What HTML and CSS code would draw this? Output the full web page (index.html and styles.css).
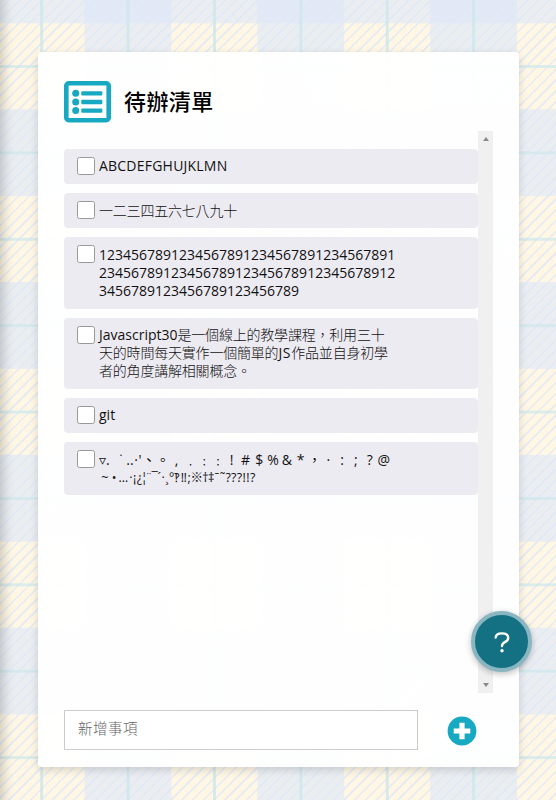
FILE: index.html
```html
<!DOCTYPE html>
<html lang="zh-Hant">
<head>
<meta charset="utf-8">
<title>待辦清單</title>
<link rel="stylesheet" href="styles.css">
</head>
<body>
<main class="card">
  <header class="head">
    <svg class="list-icon" viewBox="0 0 47 42">
      <rect x="2.3" y="2.3" width="42.4" height="36.9" rx="2.5" fill="none" stroke="#17a9c1" stroke-width="4.6"/>
      <g fill="#17a9c1"><circle cx="11.7" cy="12.3" r="3.5"/><circle cx="11.7" cy="20.9" r="3.5"/><circle cx="11.7" cy="29.6" r="3.5"/>
      <rect x="17.3" y="10.2" width="21" height="4.4" rx="1"/><rect x="17.3" y="18.8" width="21" height="4.4" rx="1"/><rect x="17.3" y="27.4" width="21" height="4.4" rx="1"/></g>
    </svg>
    <h1>待辦清單</h1>
  </header>
  <section class="scroll">
    <ul class="list">
      <li><i class="box"></i><p class="caps">ABCDEFGHUJKLMN</p></li>
      <li><i class="box"></i><p class="han">一二三四五六七八九十</p></li>
      <li><i class="box"></i><p>1234567891234567891234567891234567891<br>2345678912345678912345678912345678912<br>3456789123456789123456789</p></li>
      <li><i class="box"></i><p class="han"><span class="latin">Javascript30</span>是一個線上的教學課程，利用三十<br>天的時間每天實作一個簡單的<span class="latin js">JS</span>作品並自身初學<br>者的角度講解相關概念。</p></li>
      <li><i class="box"></i><p>git</p></li>
      <li><i class="box"></i><div class="marks">
        <div class="line"><b class="start">▿.</b><b class="end">˙</b><b class="gap">..</b><b class="dot">·</b><b class="dot">'</b><b>、</b><b>。</b><b>,</b><b>﹒</b><b>﹕</b><b>﹕</b><b>!</b><b>#</b><b>$</b><b>%</b><b>&amp;</b><b>*</b><b>，</b><b>·</b><b>:</b><b>;</b><b>?</b><b class="at">@</b></div>
        <div class="line dense"><b class="w3">~</b><b class="w2">•</b><b class="w3">…</b><b>·</b><b>¡</b><b class="w1">¿</b><b>¦</b><b class="w1">¨</b><b class="w1">¯</b><b>´</b><b>·</b><b>¸</b><b class="w1">º</b><b class="w1">‽</b><b class="w2">‼</b><b>;</b><b class="w3">※</b><b class="w1">†</b><b class="w1">‡</b><b class="w1">ˉ</b><b class="w1">˜</b><b class="w1">?</b><b class="w1">?</b><b class="w1">?</b><b>!</b><b>!</b><b class="w1">?</b></div>
      </div></li>
    </ul>
    <div class="bar"><i class="up"></i><i class="down"></i></div>
  </section>
  <footer class="foot">
    <input type="text" placeholder="新增事項">
    <svg class="add" viewBox="0 0 30 30"><circle cx="15" cy="15" r="14.4" fill="#17a9c1"/><path d="M15 6.7V23.3M6.7 15H23.3" stroke="#fff" stroke-width="5.2"/></svg>
  </footer>
</main>
<div class="help"><svg viewBox="0 0 20 24"><path d="M3.7 7.5C3.9 4.5 6.7 3.4 9.9 3.4c3.8 0 6.3 1.7 6.3 4.5 0 2.1-1.5 3.2-3.4 4.2-2 1.1-2.8 2-2.8 4" fill="none" stroke="#fff" stroke-width="2.4" stroke-linecap="round"/><circle cx="10" cy="20.7" r="1.7" fill="#fff"/></svg></div>
</body>
</html>
```
FILE: styles.css
```css
* { box-sizing: border-box; }
html, body { margin: 0; width: 556px; height: 800px; overflow: hidden; }
body {
  position: relative;
  padding: 52px 37px 33px 38px;
  font: 14px/18px "Open Sans", "Noto Sans CJK TC", sans-serif;
  color: #111;
  box-shadow: inset 15px 0 12px -12px rgba(0,0,0,.2);
  background:
    linear-gradient(90deg, rgba(205,231,236,.8) 3px, transparent 3px) 40.2px 0 / 86.4px 86.4px,
    linear-gradient(rgba(205,231,236,.7) 3px, transparent 3px) 0 65px / 86.4px 86.4px,
    repeating-linear-gradient(135deg, transparent 0 5.64px, rgba(222,232,247,.75) 5.9px 7.4px, transparent 7.64px),
    linear-gradient(90deg, transparent 50%, rgba(221,231,249,.6) 50%) -1.4px 0 / 172.8px 172.8px,
    linear-gradient(transparent 50%, rgba(221,231,249,.6) 50%) 0 23.3px / 172.8px 172.8px,
    #fff7e4;
}
.card {
  display: flex;
  flex-direction: column;
  height: 715px;
  padding: 29px 26px 17px;
  border-radius: 4px;
  background: rgba(255,255,255,.95);
  box-shadow: 0 3px 9px rgba(0,0,0,.15);
}
.head { display: flex; gap: 13px; height: 50px; }
.list-icon { width: 47px; height: 42px; }
h1 { margin: 4px 0 0; font: 500 22px/30px "Noto Sans CJK TC", sans-serif; letter-spacing: .4px; color: #000; }
.scroll { display: flex; height: 562px; }
.list { display: flex; flex-direction: column; gap: 8.8px; width: 414px; margin: 0; padding: 17.8px 0 0; list-style: none; }
.list li { display: flex; gap: 4px; padding: 8.7px 0 8.75px 13px; border-radius: 4px; background: #edebf2; }
.box { flex: none; width: 18px; height: 18px; margin-top: -.6px; border: 1px solid #999; border-radius: 2.5px; background: #fff; }
p { margin: 0; font-weight: 400; }
.han { font-family: "Open Sans", "Noto Sans CJK TC", sans-serif; font-weight: 300; letter-spacing: -.2px; }
.latin { font-weight: 400; letter-spacing: 0; }
.js { letter-spacing: .7px; }
.caps { letter-spacing: .22px; }
.line { display: flex; height: 18px; }
.line b { flex: none; width: 13.8px; font-weight: 400; white-space: nowrap; text-align: center; }
.line .start { width: 17px; text-align: left; }
.line .end { width: 10px; }
.line .gap { width: 8px; }
.line .dot { width: 4px; }
.line .at { width: 14.5px; }
.dense b { display: flex; justify-content: center; width: 3.8px; font-size: 12.5px; }
.dense .w1 { width: 5.7px; }
.dense .w2 { width: 7px; }
.dense .w3 { width: 11.5px; }
.bar { display: flex; flex-direction: column; justify-content: space-between; align-items: center; width: 15px; padding: 6px 0; background: #f0f0f0; }
.up, .down { border: 0 solid transparent; }
.up { border-width: 0 3.5px 4px; border-bottom-color: #8a8a8a; }
.down { border-width: 4px 3.5px 0; border-top-color: #8a8a8a; }
.foot { display: flex; align-items: center; gap: 29px; margin-top: 17px; }
input { width: 354px; height: 40px; padding: 0 13px 5px; border: 1px solid #ccc; background: #fff; font: 300 14.5px "Noto Sans CJK TC", sans-serif; letter-spacing: .5px; }
input::placeholder { color: #666; opacity: 1; }
.add { width: 30px; height: 30px; margin-top: 2px; }
.help {
  position: absolute;
  right: 24px;
  bottom: 128px;
  display: flex;
  align-items: center;
  justify-content: center;
  width: 61px;
  height: 61px;
  border: 4.5px solid #8ab6c2;
  border-radius: 50%;
  background: #147083;
  box-shadow: 0 2px 6px rgba(0,0,0,.25);
}
.help svg { width: 20px; height: 24px; }
```
